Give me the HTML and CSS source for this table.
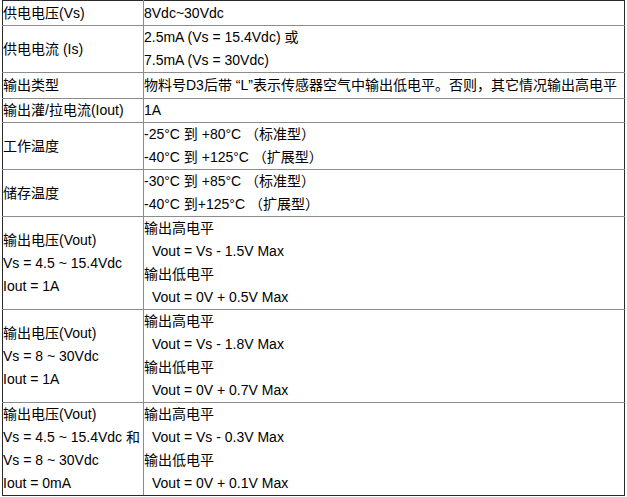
FILE: index.html
```html
<!DOCTYPE html>
<html lang="zh-CN">
<head>
<meta charset="utf-8">
<title>参数</title>
<link rel="stylesheet" href="styles.css">
</head>
<body>
<table class="spec">
  <colgroup><col class="c1"><col class="c2"></colgroup>
  <tr class="r25">
    <td>供电电压(Vs)</td>
    <td>8Vdc~30Vdc</td>
  </tr>
  <tr class="r45">
    <td>供电电流 (Is)</td>
    <td>2.5mA (Vs = 15.4Vdc) 或<br>7.5mA (Vs = 30Vdc)</td>
  </tr>
  <tr class="r26">
    <td>输出类型</td>
    <td class="nw">物料号D3后带 “L”表示传感器空气中输出低电平。否则，其它情况输出高电平</td>
  </tr>
  <tr class="r24">
    <td>输出灌/拉电流(Iout)</td>
    <td>1A</td>
  </tr>
  <tr class="r47">
    <td>工作温度</td>
    <td>-25°C 到 +80°C （标准型）<br>-40°C 到 +125°C （扩展型）</td>
  </tr>
  <tr class="r47">
    <td>储存温度</td>
    <td>-30°C 到 +85°C （标准型）<br>-40°C 到+125°C （扩展型）</td>
  </tr>
  <tr class="r93">
    <td>输出电压(Vout)<br>Vs = 4.5 ~ 15.4Vdc<br>Iout = 1A</td>
    <td><div>输出高电平</div><div class="ind">Vout = Vs - 1.5V Max</div><div>输出低电平</div><div class="ind">Vout = 0V + 0.5V Max</div></td>
  </tr>
  <tr class="r93">
    <td>输出电压(Vout)<br>Vs = 8 ~ 30Vdc<br>Iout = 1A</td>
    <td><div>输出高电平</div><div class="ind">Vout = Vs - 1.8V Max</div><div>输出低电平</div><div class="ind">Vout = 0V + 0.7V Max</div></td>
  </tr>
  <tr class="r93">
    <td>输出电压(Vout)<br>Vs = 4.5 ~ 15.4Vdc 和<br>Vs = 8 ~ 30Vdc<br>Iout = 0mA</td>
    <td><div>输出高电平</div><div class="ind">Vout = Vs - 0.3V Max</div><div>输出低电平</div><div class="ind">Vout = 0V + 0.1V Max</div></td>
  </tr>
</table>
</body>
</html>
```

FILE: styles.css
```css
html, body {
  margin: 0;
  padding: 0;
  background: #fff;
}
body {
  padding: 0 0 0 2px;
  font-family: "Liberation Sans", "Noto Sans CJK SC", sans-serif;
  font-size: 14px;
  color: #000;
}
.spec {
  border-collapse: collapse;
  table-layout: fixed;
  width: 623px;
}
.c1 { width: 141px; }
.spec td {
  border: 1px solid #8c8c8c;
  padding: 0;
  line-height: 23px;
  vertical-align: middle;
  white-space: nowrap;
}
.spec tr td:first-child { border-left-color: #2a2a2a; }
.spec tr td:last-child { border-right-color: #2a2a2a; }
.spec tr:first-child td { border-top-color: #2a2a2a; }
.spec tr:last-child td { border-bottom-color: #2a2a2a; }
.ind { padding-left: 8px; }
.r25 { height: 25px; }
.r45 { height: 45px; }
.r26 { height: 26px; }
.r24 { height: 24px; }
.r47 { height: 47px; }
.r93 { height: 93px; }
```
